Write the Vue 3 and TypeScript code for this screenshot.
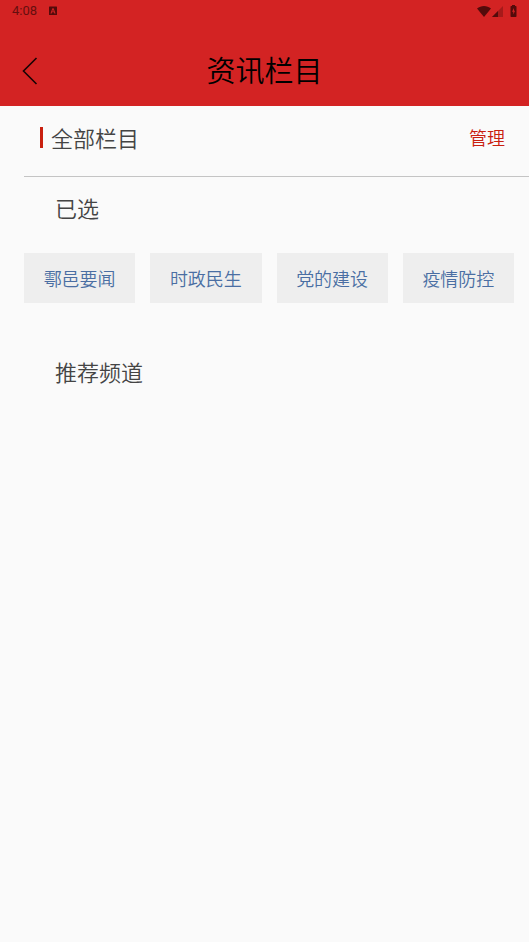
<script setup lang="ts">
import { ref } from 'vue'

interface Channel {
  id: number
  name: string
}

const selected = ref<Channel[]>([
  { id: 1, name: '鄠邑要闻' },
  { id: 2, name: '时政民生' },
  { id: 3, name: '党的建设' },
  { id: 4, name: '疫情防控' },
])
</script>

<template>
  <div class="page">
    <header class="header">
      <div class="status">
        <span class="time">4:08</span>
        <svg class="badge" viewBox="0 0 10 10" width="10" height="10" aria-hidden="true">
          <path fill-rule="evenodd" d="M1.5 .5h7a.5 .5 0 0 1 .5 .5v7.500a.5 .5 0 0 1-.5 .5h-7a.5 .5 0 0 1-.5-.5V1a.5 .5 0 0 1 .5-.5ZM4.400 2.200 2.400 7.500h1.200l.4-1.200h2l.4 1.200h1.200L5.600 2.200ZM5 3.600l.7 1.800H4.300Z" />
        </svg>
        <div class="signals">
          <svg viewBox="0 0 14 11" width="14" height="11" aria-hidden="true">
            <path d="M0 2.6C4-.8 10-.8 14 2.6L7 11Z" />
          </svg>
          <svg viewBox="0 0 11 11" width="11" height="11" aria-hidden="true">
            <path opacity=".35" d="M11 0v11H0Z" />
            <path d="M6 5v6H0Z" />
          </svg>
          <svg class="battery" viewBox="0 0 7 12" width="7" height="12" aria-hidden="true">
            <path fill-rule="evenodd" d="M2 0h3v1h.7a.8 .8 0 0 1 .8 .8v9.400a.8 .8 0 0 1-.8 .8H1.300a.8 .8 0 0 1-.8-.8V1.800a.8 .8 0 0 1 .8-.8H2ZM4 3 2 6.700h1.300v2.800l1.800-3.700H4Z" />
          </svg>
        </div>
      </div>
      <div class="toolbar">
        <button class="back" type="button" aria-label="返回">
          <svg viewBox="0 0 16 28" width="16" height="28" aria-hidden="true">
            <path d="M14.500 1 1.500 14l13 13" />
          </svg>
        </button>
        <h1 class="title">资讯栏目</h1>
      </div>
    </header>

    <main>
      <div class="all">
        <h2 class="all-title">全部栏目</h2>
        <button class="manage" type="button">管理</button>
      </div>
      <section>
        <h3 class="subtitle">已选</h3>
        <div class="channels">
          <button v-for="c in selected" :key="c.id" class="channel" type="button">{{ c.name }}</button>
        </div>
      </section>
      <section class="recommended">
        <h3 class="subtitle">推荐频道</h3>
      </section>
    </main>
  </div>
</template>

<style>
body {
  margin: 0;
  background: #fafafa;
}
</style>

<style scoped>
.page {
  min-height: 100vh;
  background: #fafafa;
  color: #444;
  font-family: "Noto Sans CJK SC", sans-serif;
  font-weight: 350;
}
h1, h2, h3 {
  margin: 0;
  font-weight: inherit;
}
button {
  border: 0;
  padding: 0;
  background: none;
  font-family: inherit;
  font-weight: inherit;
  cursor: pointer;
}
svg {
  display: block;
}
.header {
  background: #d32323;
  color: #000;
}
.status {
  display: flex;
  align-items: center;
  height: 22px;
  padding: 0 12px;
  color: #650f0f;
  fill: #540b0b;
}
.time {
  font: 13px/22px Roboto, sans-serif;
}
.badge {
  margin-left: 11px;
}
.signals {
  display: flex;
  align-items: center;
  gap: 1px;
  margin-left: auto;
}
.battery {
  margin-left: 6px;
}
.toolbar {
  display: grid;
  grid-template-columns: 60px 1fr 60px;
  align-items: center;
  height: 70px;
  padding-top: 14px;
}
.back {
  display: flex;
  align-items: center;
  height: 48px;
  padding-left: 22px;
}
.back path {
  fill: none;
  stroke: #180404;
  stroke-width: 1.6;
}
.title {
  padding-bottom: 4px;
  font-size: 29px;
  line-height: 44px;
  text-align: center;
}
.all {
  display: flex;
  align-items: center;
  justify-content: space-between;
  margin-left: 24px;
  padding: 15px 24px 23px 16px;
  border-bottom: 1px solid #c4c4c4;
}
.all-title {
  display: flex;
  align-items: center;
  gap: 8px;
  font-size: 22px;
  line-height: 32px;
}
.all-title::before {
  content: "";
  width: 3px;
  height: 21px;
  background: #c9200f;
}
.manage {
  color: #c9200f;
  font-size: 18px;
  line-height: 32px;
}
.subtitle {
  padding: 14px 55px 30px;
  font-size: 22px;
  line-height: 32px;
}
.channels {
  display: grid;
  grid-template-columns: repeat(4, 1fr);
  gap: 15px;
  padding: 0 15px 0 24px;
}
.channel {
  height: 50px;
  background: #eee;
  color: #4a6ea3;
  font-size: 18px;
  white-space: nowrap;
}
.recommended {
  margin-top: 38px;
}
</style>
